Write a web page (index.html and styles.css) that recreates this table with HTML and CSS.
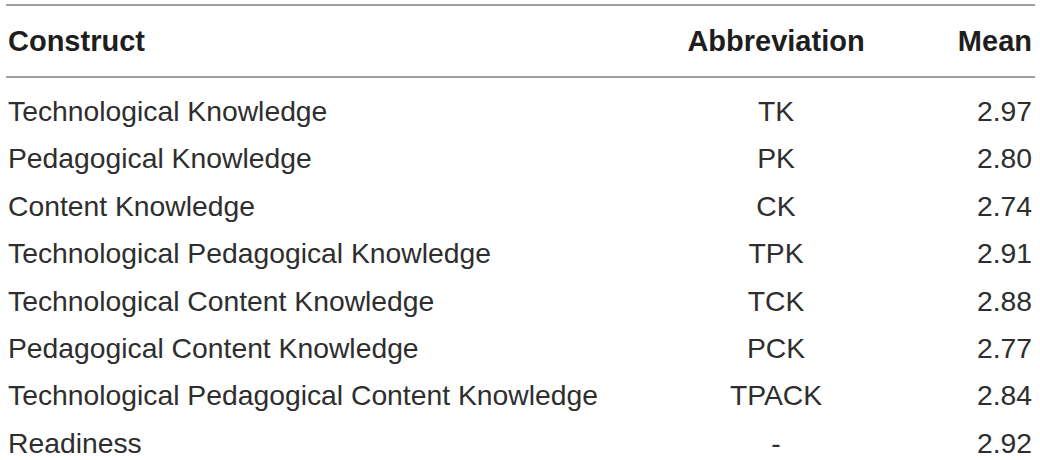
FILE: index.html
```html
<!DOCTYPE html>
<html>
<head>
<meta charset="utf-8">
<link rel="stylesheet" href="styles.css">
</head>
<body>
<table class="data">
  <thead>
    <tr><th class="c1">Construct</th><th class="c2">Abbreviation</th><th class="c3">Mean</th></tr>
  </thead>
  <tbody>
    <tr><td class="c1">Technological Knowledge</td><td class="c2">TK</td><td class="c3">2.97</td></tr>
    <tr><td class="c1">Pedagogical Knowledge</td><td class="c2">PK</td><td class="c3">2.80</td></tr>
    <tr><td class="c1">Content Knowledge</td><td class="c2">CK</td><td class="c3">2.74</td></tr>
    <tr><td class="c1">Technological Pedagogical Knowledge</td><td class="c2">TPK</td><td class="c3">2.91</td></tr>
    <tr><td class="c1">Technological Content Knowledge</td><td class="c2">TCK</td><td class="c3">2.88</td></tr>
    <tr><td class="c1">Pedagogical Content Knowledge</td><td class="c2">PCK</td><td class="c3">2.77</td></tr>
    <tr><td class="c1">Technological Pedagogical Content Knowledge</td><td class="c2">TPACK</td><td class="c3">2.84</td></tr>
    <tr><td class="c1">Readiness</td><td class="c2">-</td><td class="c3">2.92</td></tr>
  </tbody>
</table>
</body>
</html>
```
FILE: styles.css
```css
html, body {
  margin: 0;
  padding: 0;
  background: #fff;
}
body {
  padding: 4px 0 0 6px;
  font-family: "Liberation Sans", Arial, sans-serif;
  color: #2e2e2e;
}
.data {
  width: 1029px;
  border-collapse: collapse;
  font-size: 28.3px;
}
.data thead th {
  font-weight: bold;
  font-size: 29px;
  color: #1e1e1e;
  height: 70px;
  border-top: 2px solid #a0a0a0;
  border-bottom: 2px solid #a0a0a0;
  padding: 0;
  vertical-align: middle;
}
.data td {
  height: 47.4px;
  line-height: 47.4px;
  padding: 0;
  vertical-align: top;
}
.data tbody tr:first-child td {
  padding-top: 10px;
}
.data .c1 { text-align: left; padding-left: 2px; }
.data .c2 { text-align: center; width: 200px; }
.data .c3 { text-align: right; width: 156px; padding-right: 3px; }
```
